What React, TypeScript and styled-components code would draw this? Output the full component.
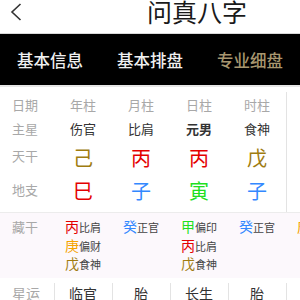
import styled, { createGlobalStyle } from 'styled-components';

const GlobalStyle = createGlobalStyle`
  html, body { margin: 0; padding: 0; background: #fff; }
  body {
    font-family: "Noto Sans CJK SC", "Noto Sans", sans-serif;
    width: 300px;
    height: 300px;
    overflow: hidden;
  }
`;

const COL = 58;
const LABEL = 54;

const colors = {
  earth: '#a07c10',
  fire: '#e40000',
  water: '#3388ff',
  wood: '#1fe01f',
  metal: '#f5a300',
};

const pillars = [
  { head: '年柱', star: '伤官', stem: '己', stemColor: colors.earth, branch: '巳', branchColor: colors.fire,
    hidden: [['丙', '比肩', colors.fire], ['庚', '偏财', colors.metal], ['戊', '食神', colors.earth]], fate: '临官' },
  { head: '月柱', star: '比肩', stem: '丙', stemColor: colors.fire, branch: '子', branchColor: colors.water,
    hidden: [['癸', '正官', colors.water]], fate: '胎' },
  { head: '日柱', star: '元男', bold: true, stem: '丙', stemColor: colors.fire, branch: '寅', branchColor: colors.wood,
    hidden: [['甲', '偏印', colors.wood], ['丙', '比肩', colors.fire], ['戊', '食神', colors.earth]], fate: '长生' },
  { head: '时柱', star: '食神', stem: '戊', stemColor: colors.earth, branch: '子', branchColor: colors.water,
    hidden: [['癸', '正官', colors.water]], fate: '胎' },
];

const Page = styled.div`
  width: 300px;
  height: 300px;
  overflow: hidden;
`;

const Header = styled.div`
  height: 33px;
  display: flex;
  align-items: flex-start;
  background: #fff;
  border-bottom: 1px solid #d8d8d8;
  overflow: hidden;
`;

const Back = styled.svg`
  margin: 3px 0 0 10px;
  flex: none;
`;

const Title = styled.div`
  margin: -3px 0 0 125px;
  font-size: 25px;
  line-height: 28px;
  color: #1a1a1a;
  white-space: nowrap;
`;

const Tabs = styled.div`
  height: 51px;
  background: #000;
  display: grid;
  grid-template-columns: repeat(3, 1fr);
  align-items: center;
  border-bottom: 2px solid #e6e6e6;
`;

const Tab = styled.div<{ $active?: boolean }>`
  text-align: center;
  font-size: 16.5px;
  font-weight: 500;
  color: ${(p) => (p.$active ? '#a8976f' : '#f0f0f0')};
  padding-top: 1px;
`;

const Table = styled.div`
  display: grid;
  grid-template-columns: ${LABEL}px repeat(4, ${COL}px) 1fr;
  grid-template-rows: 24px 24px 34px 32px;
  padding: 5px 0 6px;
  border-bottom: 1px solid #ececec;
`;

const Label = styled.div<{ $top?: boolean }>`
  font-size: 13px;
  color: #a8a8a8;
  padding-left: 12px;
  display: flex;
  align-items: ${(p) => (p.$top ? 'flex-start' : 'center')};
  padding-top: ${(p) => (p.$top ? '6px' : '0')};
`;

const Cell = styled.div<{ $color?: string; $bold?: boolean; $big?: boolean }>`
  display: flex;
  align-items: center;
  justify-content: center;
  font-size: ${(p) => (p.$big ? '20px' : '13px')};
  color: ${(p) => p.$color || '#333'};
  font-weight: ${(p) => (p.$bold ? 600 : 400)};
`;

const Side = styled.div`
  grid-column: 6;
  grid-row: 1 / span 4;
  border-left: 1px solid #e3e3e3;
  margin-bottom: -6px;
`;

const Hidden = styled.div`
  display: grid;
  grid-template-columns: ${LABEL}px repeat(5, ${COL}px);
  background: #fcf8fc;
  box-sizing: border-box;
  padding-top: 4px;
  height: 65px;
  overflow: hidden;
`;

const HiddenLabel = styled.div`
  font-size: 13px;
  color: #a8a8a8;
  padding-left: 12px;
  line-height: 20px;
`;

const HiddenCell = styled.div`
  display: flex;
  justify-content: center;
  align-items: flex-start;
`;

const HiddenList = styled.div`
  display: flex;
  flex-direction: column;
`;

const HiddenItem = styled.div`
  display: flex;
  align-items: baseline;
  height: 18.5px;
  white-space: nowrap;
`;

const Stem = styled.span<{ $color: string }>`
  font-size: 14px;
  line-height: 18px;
  color: ${(p) => p.$color};
`;

const God = styled.span`
  font-size: 11px;
  color: #444;
`;

const FateRow = styled.div`
  display: grid;
  grid-template-columns: ${LABEL}px repeat(4, ${COL}px) 1fr;
  height: 20px;
  padding-top: 5px;
`;

const FateCell = styled.div<{ $label?: boolean; $last?: boolean }>`
  display: flex;
  align-items: center;
  justify-content: ${(p) => (p.$label ? 'flex-start' : 'center')};
  padding-left: ${(p) => (p.$label ? '12px' : '0')};
  font-size: 14px;
  color: ${(p) => (p.$label ? '#a8a8a8' : '#333')};
  border-right: ${(p) => (p.$last ? 'none' : '1px solid #e3e3e3')};
  margin-right: -1px;
`;

export default function App() {
  return (
    <Page>
      <GlobalStyle />
      <Header>
        <Back width="12" height="18" viewBox="0 0 12 18">
          <polyline points="10.5,1 2,9 10.5,17" fill="none" stroke="#333" strokeWidth="1.6" />
        </Back>
        <Title>问真八字</Title>
      </Header>

      <Tabs>
        <Tab>基本信息</Tab>
        <Tab>基本排盘</Tab>
        <Tab $active>专业细盘</Tab>
      </Tabs>

      <Table>
        <Label>日期</Label>
        {pillars.map((p) => (
          <Cell key={p.head + 'h'} $color="#a8a8a8">{p.head}</Cell>
        ))}
        <Side />
        <Label>主星</Label>
        {pillars.map((p) => (
          <Cell key={p.head + 's'} $bold={p.bold}>{p.star}</Cell>
        ))}
        <Label $top>天干</Label>
        {pillars.map((p) => (
          <Cell key={p.head + 't'} $big $color={p.stemColor}>{p.stem}</Cell>
        ))}
        <Label $top>地支</Label>
        {pillars.map((p) => (
          <Cell key={p.head + 'b'} $big $color={p.branchColor}>{p.branch}</Cell>
        ))}
      </Table>

      <Hidden>
        <HiddenLabel>藏干</HiddenLabel>
        {pillars.map((p) => (
          <HiddenCell key={p.head + 'c'}>
            <HiddenList>
              {p.hidden.map(([s, g, c]) => (
                <HiddenItem key={s + g}>
                  <Stem $color={c}>{s}</Stem>
                  <God>{g}</God>
                </HiddenItem>
              ))}
            </HiddenList>
          </HiddenCell>
        ))}
        <HiddenCell>
          <HiddenList>
            <HiddenItem>
              <Stem $color={colors.metal}>庚</Stem>
              <God>偏财</God>
            </HiddenItem>
          </HiddenList>
        </HiddenCell>
      </Hidden>

      <FateRow>
        <FateCell $label>星运</FateCell>
        {pillars.map((p) => (
          <FateCell key={p.head + 'f'}>{p.fate}</FateCell>
        ))}
        <FateCell $last />
      </FateRow>
    </Page>
  );
}
